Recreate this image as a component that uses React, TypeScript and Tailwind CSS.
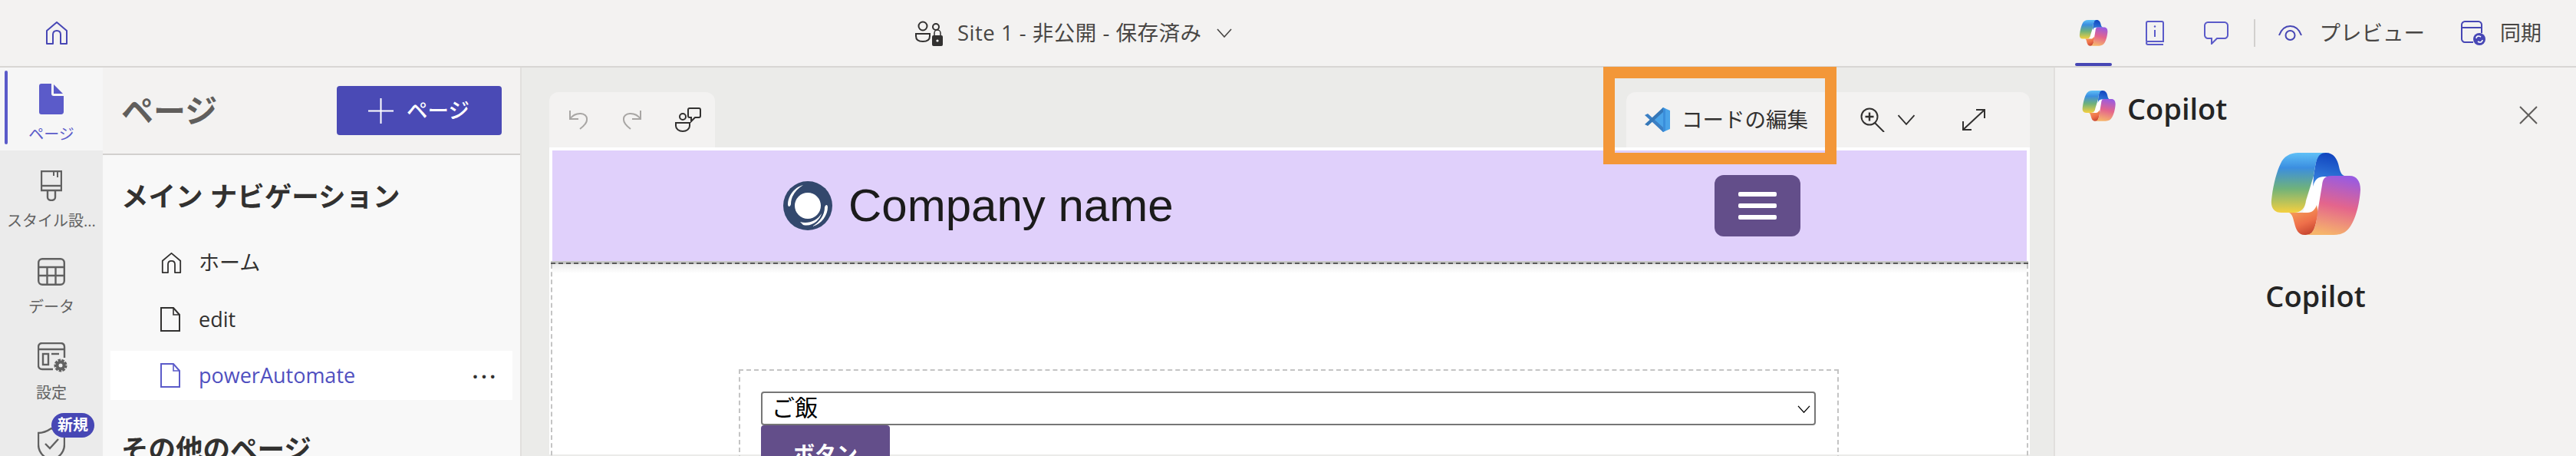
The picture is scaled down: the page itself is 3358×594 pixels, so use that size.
import React from "react";

function CopilotLogo({ className }: { className: string }) {
  return (
    <svg viewBox="0 0 117 108" className={className}>
      <defs>
        <linearGradient id="cpA" x1="0" y1="0" x2="0" y2="1">
          <stop offset="0" stopColor="#5fc0f7" />
          <stop offset="0.25" stopColor="#3b8ee0" />
          <stop offset="0.6" stopColor="#70b27a" />
          <stop offset="1" stopColor="#f5d03f" />
        </linearGradient>
        <linearGradient id="cpB" x1="0.6" y1="0" x2="0.4" y2="1">
          <stop offset="0" stopColor="#0e41bd" />
          <stop offset="1" stopColor="#3a86e0" />
        </linearGradient>
        <linearGradient id="cpC" x1="0.6" y1="0" x2="0.4" y2="1">
          <stop offset="0" stopColor="#9a5be0" />
          <stop offset="0.5" stopColor="#e4658c" />
          <stop offset="1" stopColor="#f6b56b" />
        </linearGradient>
        <linearGradient id="cpD" x1="0.3" y1="0" x2="0.7" y2="1">
          <stop offset="0" stopColor="#f6a55c" />
          <stop offset="0.6" stopColor="#ee6f4a" />
          <stop offset="1" stopColor="#c4432e" />
        </linearGradient>
      </defs>
      <path d="M56 30H74L60 78H42Z" fill="#fff" />
      <path d="M66 0H72C82 0 87 8 89 18C91 27 93 31 102 31H70C62 31 58 34 55 44L56 30C59 12 60 2 66 0Z" fill="url(#cpB)" />
      <path d="M36 0H72C60 0 59 12 56 30L46 62C45 72 40 78 30 78H14C5 78 0 72 1 62C3 42 8 24 13 14C17 5 25 0 36 0Z" fill="url(#cpA)" />
      <path d="M24 78H48C54 78 58 74 60 68L62 78C58 96 57 107 46 107H44C36 107 33 100 31 92C29 84 28 80 24 78Z" fill="url(#cpD)" />
      <path d="M72 30H103C112 30 117 37 117 48C116 66 111 84 105 94C100 103 93 107 82 107H46C56 107 59 96 61 78L67 42C68 34 70 30 80 30Z" fill="url(#cpC)" />
    </svg>
  );
}

function Home({ className }: { className: string }) {
  return (
    <svg viewBox="0 0 28 30" fill="none" stroke="currentColor" strokeWidth="2" className={className}>
      <path d="M1 12L14 1L27 12V29H19V17C19 14 17 12 14 12C11 12 9 14 9 17V29H1Z" strokeLinejoin="round" />
    </svg>
  );
}

function Doc({ className }: { className: string }) {
  return (
    <svg viewBox="0 0 26 32" fill="none" stroke="currentColor" strokeWidth="2" className={className}>
      <path d="M1 1H17L25 10V31H1Z" />
      <path d="M17 1V10H25" strokeWidth="1.6" />
    </svg>
  );
}

function Chevron({ className }: { className: string }) {
  return (
    <svg viewBox="0 0 20 12" fill="none" stroke="currentColor" strokeWidth="1.6" className={className}>
      <path d="M1 1L10 11L19 1" />
    </svg>
  );
}

function RailItem({ icon, label }: { icon: React.ReactNode; label: string }) {
  return (
    <div className="relative flex h-[112px] flex-col items-center pt-[26px] text-[#616161]">
      <div className="flex h-[40px] items-center justify-center">{icon}</div>
      <div className="mt-[12px] whitespace-nowrap text-[20px] leading-[28px]">{label}</div>
    </div>
  );
}

function PageRow({ icon, label, active }: { icon: React.ReactNode; label: string; active?: boolean }) {
  return (
    <div className={`mx-[10px] flex h-[64px] items-center pl-[65px] pr-[18px] ${active ? "bg-white text-[#5050c0]" : "text-[#323130]"}`}>
      <div className="flex w-[50px] shrink-0 items-center">{icon}</div>
      <div className="flex-1 text-[27px] leading-[36px]">{label}</div>
      {active && <div className="pb-[12px] text-[26px] font-bold leading-none tracking-[4px] text-[#323130]">...</div>}
    </div>
  );
}

export default function App() {
  return (
    <div className="relative flex h-[594px] w-[3358px] flex-col overflow-hidden bg-[#f3f2f1] font-['Open_Sans','Noto_Sans_CJK_JP',sans-serif] text-[#323130]">
      {/* top bar */}
      <header className="flex h-[88px] shrink-0 items-center border-b-2 border-[#d8d6d4] bg-[#f3f2f1]">
        <div className="w-[1193px] shrink-0 pl-[60px]">
          <Home className="h-[30px] w-[28px] text-[#4747b5]" />
        </div>
        <div className="flex items-center">
          <svg viewBox="0 0 37 33" className="h-[33px] w-[37px]" fill="none" stroke="#323130" strokeWidth="2">
            <circle cx="10" cy="7" r="5.5" />
            <circle cx="27" cy="8" r="4" />
            <path d="M1 17H19V20C19 25 15 27 10 27C5 27 1 25 1 20Z" />
            <rect x="22" y="19" width="14" height="14" rx="2" fill="#323130" stroke="none" />
            <path d="M25 19V16A4 4 0 0 1 33 16V19" strokeWidth="1.5" />
            <circle cx="29" cy="26" r="1.6" fill="#fff" stroke="none" />
          </svg>
          <span className="ml-[18px] whitespace-nowrap text-[27.5px] leading-[36px] tracking-[0.5px] text-[#484644]">Site 1 - 非公開 - 保存済み</span>
          <Chevron className="ml-[20px] h-[12px] w-[20px] text-[#484644]" />
        </div>
        <div className="ml-auto flex h-full items-center">
          <div className="relative flex h-full w-[48px] items-center justify-center">
            <CopilotLogo className="h-[34px] w-[38px]" />
            <div className="absolute bottom-0 left-0 h-[4px] w-[48px] rounded-[2px] bg-[#4747b5]" />
          </div>
          <svg viewBox="0 0 24 32" className="ml-[44px] h-[32px] w-[24px]" fill="none" stroke="#5b5bc9" strokeWidth="2">
            <path d="M1 27V3C1 2 2 1 3 1H21C22 1 23 2 23 3V27H3C2 27 1 28 1 29C1 30 2 31 3 31H23" />
            <path d="M12 12V21" />
            <circle cx="12" cy="7.5" r="1.2" fill="#5b5bc9" stroke="none" />
          </svg>
          <svg viewBox="0 0 32 30" className="ml-[52px] h-[30px] w-[32px]" fill="none" stroke="#5b5bc9" strokeWidth="2">
            <path d="M5 1H27C29 1 31 3 31 5V18C31 20 29 22 27 22H17L10 29V22H5C3 22 1 20 1 18V5C1 3 3 1 5 1Z" />
          </svg>
          <div className="ml-[33px] h-[36px] w-[2px] bg-[#d2d0ce]" />
          <svg viewBox="0 0 31 22" className="ml-[30px] h-[22px] w-[31px]" fill="none" stroke="#4747b5" strokeWidth="2">
            <path d="M1 14C4 6 9 2 15.5 2C22 2 27 6 30 14" />
            <circle cx="15.5" cy="14" r="6" />
          </svg>
          <span className="ml-[23px] whitespace-nowrap text-[27.5px] leading-[36px] text-[#484644]">プレビュー</span>
          <svg viewBox="0 0 32 32" className="ml-[47px] h-[32px] w-[32px]" fill="none" stroke="#4747b5" strokeWidth="2">
            <path d="M16 28H5C3 28 1 26 1 24V5C1 3 3 1 5 1H23C25 1 27 3 27 5V16" />
            <path d="M1 9H27" />
            <circle cx="24" cy="24" r="8" fill="#4747b5" stroke="none" />
            <path d="M20 23C20 20 23 19 26 21M28 25C28 28 25 29 22 27" stroke="#fff" strokeWidth="1.6" />
          </svg>
          <span className="ml-[19px] mr-[45px] whitespace-nowrap text-[27px] leading-[36px] text-[#484644]">同期</span>
        </div>
      </header>

      <div className="flex min-h-0 flex-1">
        {/* rail */}
        <nav className="w-[134px] shrink-0 bg-[#ebebeb]">
          <div className="relative flex h-[108px] flex-col items-center bg-[#f6f6f6] pt-[21px] text-[#5b5bc9]">
            <div className="absolute left-[6px] top-[4px] h-[96px] w-[4px] rounded-[2px] bg-[#5b5bc9]" />
            <svg viewBox="0 0 32 40" className="h-[40px] w-[32px]">
              <path d="M3 0H16V13C16 15 17 16 19 16H32V37C32 39 30 40 29 40H3C1 40 0 39 0 37V3C0 1 1 0 3 0Z" fill="#5b5bc9" />
              <path d="M19 1L31 13H19Z" fill="#5b5bc9" />
            </svg>
            <div className="mt-[12px] text-[20px] leading-[28px]">ページ</div>
          </div>
          <RailItem
            label="スタイル設..."
            icon={
              <svg viewBox="0 0 28 40" className="h-[40px] w-[28px]" fill="none" stroke="#616161" strokeWidth="2.4">
                <path d="M1 1H27V26H1Z" />
                <path d="M1 20H27" />
                <path d="M17 1V7M22 1V9" strokeWidth="2" />
                <path d="M9 26V35C9 37 11 39 14 39C17 39 19 37 19 35V26" />
              </svg>
            }
          />
          <RailItem
            label="データ"
            icon={
              <svg viewBox="0 0 36 36" className="h-[36px] w-[36px]" fill="none" stroke="#616161" strokeWidth="2.4">
                <rect x="1.2" y="1.2" width="33.6" height="33.6" rx="5" />
                <path d="M1 12H35M1 23H35M12.5 12V35M23.5 12V35" />
              </svg>
            }
          />
          <RailItem
            label="設定"
            icon={
              <svg viewBox="0 0 40 40" className="ml-[4px] h-[40px] w-[40px]" fill="none" stroke="#616161" strokeWidth="2.4">
                <path d="M20 35H6C3 35 1 33 1 30V6C1 3 3 1 6 1H30C33 1 35 3 35 6V20" />
                <path d="M1 9H35" />
                <rect x="7" y="15" width="7" height="14" />
                <path d="M18 15H28" />
                <circle cx="30" cy="30" r="6" strokeWidth="5" strokeDasharray="3 1.1" />
                <circle cx="30" cy="30" r="4.5" strokeWidth="4" />
              </svg>
            }
          />
          <div className="relative flex h-[112px] flex-col items-center pt-[25px]">
            <svg viewBox="0 0 36 44" className="h-[44px] w-[36px]" fill="none" stroke="#616161" strokeWidth="2.4">
              <path d="M18 1C24 5 29 7 35 7V22C35 32 28 39 18 43C8 39 1 32 1 22V7C7 7 12 5 18 1Z" />
              <path d="M10 21L16 27L27 15" />
            </svg>
            <div className="absolute left-[67px] top-[6px] flex h-[32px] w-[56px] items-center justify-center rounded-full bg-[#4747b5] text-[20px] font-bold leading-none text-white">新規</div>
          </div>
        </nav>

        {/* pages panel */}
        <aside className="w-[546px] shrink-0 border-r-2 border-[#e1dfdd] bg-[#f8f8f8]">
          <div className="flex h-[114px] items-center justify-between border-b-2 border-[#d2d0ce] bg-[#f3f2f1] pl-[24px] pr-[24px]">
            <h1 className="text-[42px] font-semibold leading-[52px] text-[#605e5c]">ページ</h1>
            <button className="flex h-[64px] w-[215px] items-center rounded-[4px] bg-[#4a4ab5] pl-[41px] text-white">
              <svg viewBox="0 0 33 33" className="h-[33px] w-[33px]" stroke="#fff" strokeWidth="2">
                <path d="M16.5 0V33M0 16.5H33" />
              </svg>
              <span className="ml-[17px] text-[27.5px] font-medium leading-[36px]">ページ</span>
            </button>
          </div>
          <h2 className="mt-[30px] pl-[24px] text-[35.5px] font-semibold leading-[46px] text-[#323130]">メイン ナビゲーション</h2>
          <div className="mt-[32px]">
            <PageRow icon={<Home className="h-[27px] w-[29px]" />} label="ホーム" />
          </div>
          <div className="mt-[10px]">
            <PageRow icon={<Doc className="h-[32px] w-[26px]" />} label="edit" />
          </div>
          <div className="mt-[9px]">
            <PageRow active icon={<Doc className="h-[32px] w-[26px] text-[#5b5bc9]" />} label="powerAutomate" />
          </div>
          <h2 className="mt-[40px] pl-[24px] text-[35.5px] font-semibold leading-[46px] text-[#323130]">その他のページ</h2>
        </aside>

        {/* main */}
        <main className="w-[1999px] shrink-0 border-r-2 border-[#e1dfdd] bg-[#ebebe9] pl-[36px] pt-[32px]">
          <div className="w-[1930px]">
            <div className="flex h-[72px] justify-between">
              <div className="flex w-[216px] items-center rounded-t-[12px] bg-[#f3f2f1] pl-[26px]">
                <svg viewBox="0 0 24 26" className="h-[26px] w-[24px]" fill="none" stroke="#a8a6a4" strokeWidth="2">
                  <path d="M1 1V12H12M1 12C8 2 24 3 23 13C23 17 18 22 14 25" />
                </svg>
                <svg viewBox="0 0 24 26" className="ml-[46px] h-[26px] w-[24px]" fill="none" stroke="#a8a6a4" strokeWidth="2">
                  <path d="M23 1V12H12M23 12C16 2 0 3 1 13C1 17 6 22 10 25" />
                </svg>
                <svg viewBox="0 0 34 32" className="ml-[44px] h-[32px] w-[34px]" fill="none" stroke="#323130" strokeWidth="2">
                  <circle cx="10" cy="12" r="4" />
                  <path d="M1 20H19V24C19 28 15 31 10 31C5 31 1 28 1 24Z" />
                  <path d="M19 1H31C32 1 33 2 33 3V11C33 12 32 13 31 13H26L21 18V13H19C18 13 17 12 17 11V3C17 2 18 1 19 1Z" />
                </svg>
              </div>
              <div className="flex w-[526px] items-center rounded-t-[12px] bg-[#f3f2f1] pl-[24px]">
                <svg viewBox="0 0 33 32" className="h-[32px] w-[33px]">
                  <path d="M24 0L33 4V28L24 32L10 17Z" fill="#4aa3e8" />
                  <path d="M24 0V32L27 30V2Z" fill="#3a8edb" />
                  <path d="M0 10L4 8L24 26V32L11 20Z" fill="#3b7fc4" />
                  <path d="M0 22L4 24L24 6V0L11 12Z" fill="#3577b8" />
                </svg>
                <span className="ml-[15px] whitespace-nowrap text-[27.5px] leading-[36px] text-[#323130]">コードの編集</span>
                <svg viewBox="0 0 32 32" className="ml-[68px] h-[32px] w-[32px]" fill="none" stroke="#323130" strokeWidth="2">
                  <circle cx="12" cy="12" r="10.5" />
                  <path d="M12 6.5V17.5M6.5 12H17.5" strokeWidth="2.4" />
                  <path d="M19 20L31 32" />
                </svg>
                <Chevron className="ml-[16px] h-[14px] w-[24px] text-[#323130]" />
                <svg viewBox="0 0 30 28" className="ml-[61px] h-[28px] w-[30px]" fill="none" stroke="#323130" strokeWidth="2">
                  <path d="M18 1H29V12M29 1L1 27M1 16V27H12" />
                </svg>
              </div>
            </div>

            {/* canvas */}
            <div className="h-[400px] bg-white">
              <div className="h-[4px]" />
              <div className="mx-[4px] flex h-[144px] items-center bg-[#e0d0fb]">
                <div className="ml-[301px] flex items-center">
                  <svg viewBox="0 0 64 64" className="h-[64px] w-[64px]">
                    <circle cx="32" cy="32" r="32" fill="#33486d" />
                    <circle cx="32" cy="32" r="17" fill="#fff" />
                    <path d="M6 30C6 20 14 8 26 5C16 11 10 20 10 30C9 34 6 34 6 30Z" fill="#fff" />
                    <path d="M58 34C58 44 50 56 38 59C48 53 54 44 54 34C55 30 58 30 58 34Z" fill="#fff" />
                    <path d="M22 53C32 56 44 52 50 42C48 50 38 60 26 57Z" fill="#fff" />
                  </svg>
                  <span className="ml-[21px] whitespace-nowrap font-['Liberation_Sans',sans-serif] text-[60px] leading-[68px] text-[#1b1b1b]">Company name</span>
                </div>
                <div className="ml-[705px] flex h-[80px] w-[112px] flex-col items-center justify-center gap-[9px] rounded-[12px] bg-[#634e8a]">
                  <div className="h-[6px] w-[50px] rounded-[2px] bg-white" />
                  <div className="h-[6px] w-[50px] rounded-[2px] bg-white" />
                  <div className="h-[6px] w-[50px] rounded-[2px] bg-white" />
                </div>
              </div>
              <div className="mx-[2px] h-[4px] border-b-2 border-dashed border-[#5a5a5a] bg-[#c6c6c6]" />
              <div className="relative mx-[2px] h-[300px] border-x-2 border-dashed border-[#c4c4c4] pl-[243px] pt-[137px]">
                <div className="absolute inset-x-0 top-0 h-[12px] bg-gradient-to-b from-[#ececec] to-white" />
                <div className="h-[200px] w-[1434px] border-2 border-dashed border-[#c4c4c4] pl-[27px] pt-[27px]">
                  <div className="relative w-[1375px]">
                    <select className="block h-[44px] w-full appearance-none rounded-[4px] border-2 border-[#767676] bg-white pl-[12px] font-['Liberation_Sans','Noto_Sans_CJK_JP',sans-serif] text-[30px] leading-[40px] text-black">
                      <option>ご飯</option>
                    </select>
                    <Chevron className="absolute right-[7px] top-[18px] h-[10px] w-[17px] text-black" />
                  </div>
                  <button className="block h-[80px] w-[168px] rounded-[4px] bg-[#634e8a] pb-[6px] text-[28px] font-bold text-white">ボタン</button>
                </div>
              </div>
            </div>
          </div>
        </main>

        {/* copilot */}
        <section className="min-w-0 flex-1 bg-[#f3f2f1]">
          <div className="flex h-[70px] items-end pl-[35px] pr-[50px]">
            <CopilotLogo className="h-[40px] w-[44px]" />
            <span className="mb-[-7px] ml-[15px] text-[38px] font-semibold leading-[48px] text-[#242424]">Copilot</span>
            <svg viewBox="0 0 24 24" className="mb-[-4px] ml-auto h-[24px] w-[24px]" fill="none" stroke="#605e5c" strokeWidth="2">
              <path d="M1 1L23 23M23 1L1 23" />
            </svg>
          </div>
          <div className="mt-[41px] flex flex-col items-center">
            <CopilotLogo className="h-[108px] w-[117px]" />
            <span className="mt-[54px] text-[38px] font-semibold leading-[48px] text-[#242424]">Copilot</span>
          </div>
        </section>
      </div>

      {/* highlight drawn over the screenshot */}
      <div className="absolute left-[2090px] top-[87px] h-[127px] w-[304px] border-[15px] border-[#f39738]" />
    </div>
  );
}
